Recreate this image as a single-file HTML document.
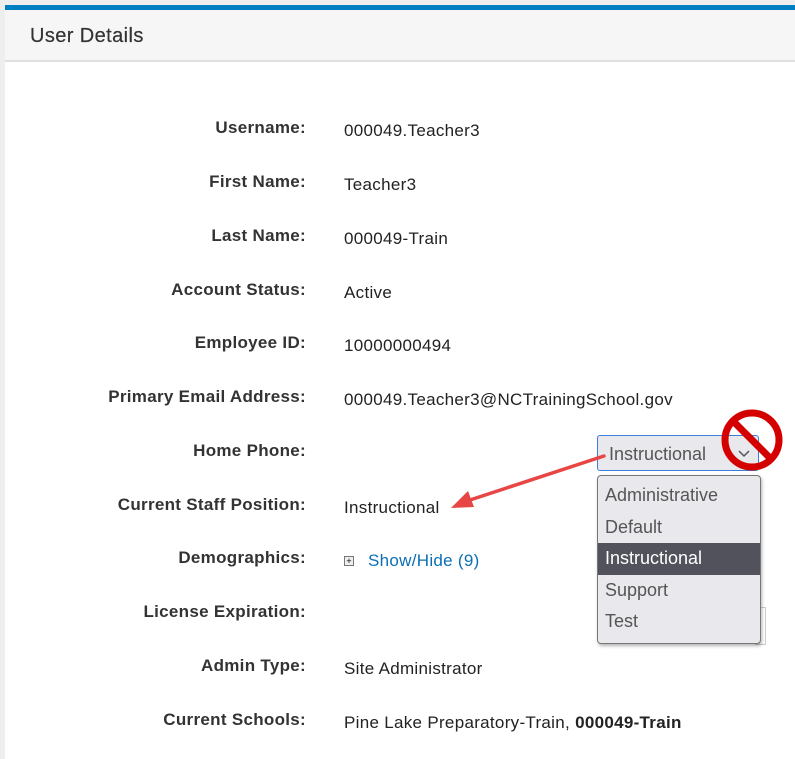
<!DOCTYPE html>
<html><head><style>
body{margin:0;width:795px;height:759px;background:#eee;font-family:"Liberation Sans",sans-serif;overflow:hidden;position:relative}
.panel{position:absolute;left:5px;top:5px;right:0;bottom:0;background:#fff;border-top:5px solid #0080c3}
.hdr{height:50px;background:#f6f6f6;border-bottom:2px solid #e0e0e0}
.hdr span{position:absolute;left:25px;top:15px;font-size:20px;color:#333;letter-spacing:0.4px;-webkit-text-stroke:0.2px #333}
.lab{position:absolute;right:489px;font-weight:bold;font-size:17px;color:#333;white-space:nowrap;letter-spacing:0.3px}
.val{position:absolute;left:344px;font-size:17px;color:#222;white-space:nowrap;letter-spacing:0.3px}
.sel{position:absolute;left:597px;top:435px;width:162px;height:36px;border:1px solid #3b7fd9;border-radius:3px;background:#e9e9ed;box-sizing:border-box;font-size:18px;color:#555;padding:8px 0 0 11px}
.list{position:absolute;left:597px;top:475px;width:164px;height:169px;border:1px solid #777;border-radius:4px;background:#e9e9ed;box-sizing:border-box;box-shadow:1px 2px 3px rgba(0,0,0,.3);padding-top:4px}
.list div{height:31.6px;line-height:31px;padding-left:7px;font-size:18px;color:#555}
.list .on{background:#52525c;color:#fff}
</style></head><body>
<div class="panel"><div class="hdr"><span>User Details</span></div></div>
<div class="lab" style="top:118px">Username:</div><div class="val" style="top:121px">000049.Teacher3</div>
<div class="lab" style="top:172px">First Name:</div><div class="val" style="top:175px">Teacher3</div>
<div class="lab" style="top:226px">Last Name:</div><div class="val" style="top:229px">000049-Train</div>
<div class="lab" style="top:280px">Account Status:</div><div class="val" style="top:283px">Active</div>
<div class="lab" style="top:333px">Employee ID:</div><div class="val" style="top:336px">10000000494</div>
<div class="lab" style="top:387px">Primary Email Address:</div><div class="val" style="top:390px">000049.Teacher3@NCTrainingSchool.gov</div>
<div class="lab" style="top:441px">Home Phone:</div>
<div class="lab" style="top:495px">Current Staff Position:</div><div class="val" style="top:498px">Instructional</div>
<div class="lab" style="top:548px">Demographics:</div>
<div class="val" style="top:551px"><span style="display:inline-block;width:8px;height:8px;border:1px solid #777;background:#eee;font-size:9px;line-height:8px;text-align:center;vertical-align:2px;margin-right:14px;color:#000;letter-spacing:0">+</span><span style="color:#0a6fb5">Show/Hide (9)</span></div>
<div class="lab" style="top:602px">License Expiration:</div>
<div class="lab" style="top:656px">Admin Type:</div><div class="val" style="top:659px">Site Administrator</div>
<div class="lab" style="top:710px">Current Schools:</div><div class="val" style="top:713px">Pine Lake Preparatory-Train, <b>000049-Train</b></div>
<div style="position:absolute;left:755px;top:607px;width:10px;height:36px;border:1px solid #ccc;border-left:none;background:#fff"></div>
<div class="sel">Instructional<svg style="position:absolute;right:8px;top:14px" width="12" height="8"><path d="M1 1l5 5 5-5" fill="none" stroke="#555" stroke-width="1.5"/></svg></div>
<div class="list"><div>Administrative</div><div>Default</div><div class="on">Instructional</div><div>Support</div><div>Test</div></div>
<svg style="position:absolute;left:0;top:0" width="795" height="759">
<circle cx="752" cy="440" r="27" fill="none" stroke="#d40000" stroke-width="7"/>
<line x1="733" y1="421" x2="771" y2="459" stroke="#d40000" stroke-width="7"/>
<line x1="604" y1="456" x2="470" y2="500" stroke="#e84545" stroke-width="3.5" stroke-linecap="round"/>
<path d="M451 508l17-17 6 16z" fill="#e84545"/>
</svg>
</body></html>
